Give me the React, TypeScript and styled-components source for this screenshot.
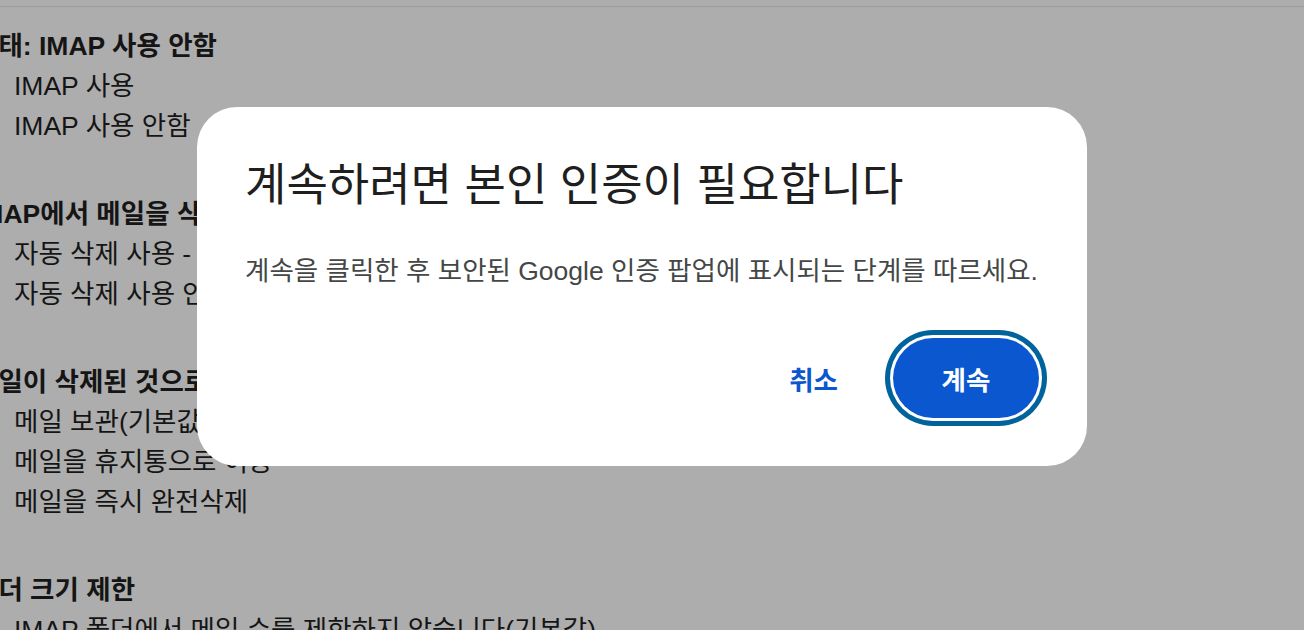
import React from "react";
import styled, { createGlobalStyle } from "styled-components";

const Global = createGlobalStyle`
  html, body { margin: 0; padding: 0; }
  body {
    width: 1304px;
    height: 630px;
    overflow: hidden;
    background: #ffffff;
    font-family: "Liberation Sans", "Noto Sans CJK KR", sans-serif;
  }
`;

const Page = styled.div`
  width: 1304px;
  height: 630px;
  overflow: hidden;
  background: #ffffff;
  padding-top: 6px;
  box-sizing: border-box;
`;

const Content = styled.div`
  border-top: 1px solid #e6e6e6;
  padding: 19px 0 0 0;
  margin-left: -26px;
  display: flex;
  flex-direction: column;
  gap: 48px;
`;

const Section = styled.section`
  display: flex;
  flex-direction: column;
`;

const Heading = styled.div`
  font-size: 26.5px;
  line-height: 40px;
  font-weight: 700;
  color: #1f1f1f;
  white-space: nowrap;
`;

const Option = styled.div`
  font-size: 26.5px;
  line-height: 40px;
  color: #1f1f1f;
  padding-left: 40px;
  white-space: nowrap;
`;

const Overlay = styled.div`
  position: fixed;
  inset: 0;
  background: rgba(0, 0, 0, 0.32);
  display: flex;
  align-items: flex-start;
  padding: 107px 0 0 197px;
`;

const Dialog = styled.div`
  width: 890px;
  box-sizing: border-box;
  background: #ffffff;
  border-radius: 40px;
  padding: 48px;
  display: flex;
  flex-direction: column;
`;

const Title = styled.h1`
  margin: 3px 0 0 0;
  font-size: 45px;
  line-height: 56px;
  font-weight: 400;
  color: #1f1f1f;
  white-space: nowrap;
`;

const Body = styled.p`
  margin: 39px 0 0 0;
  font-size: 26.5px;
  line-height: 36px;
  color: #444746;
  white-space: nowrap;
`;

const Actions = styled.div`
  margin-top: 49px;
  display: flex;
  justify-content: flex-end;
  align-items: center;
  gap: 31px;
`;

const TextButton = styled.button`
  border: none;
  background: transparent;
  height: 80px;
  padding: 0 24px;
  font-family: inherit;
  font-size: 26.5px;
  font-weight: 700;
  color: #0b57d0;
`;

const FilledButton = styled.button`
  border: none;
  background: #0b57d0;
  height: 80px;
  width: 146px;
  border-radius: 40px;
  font-family: inherit;
  font-size: 26.5px;
  font-weight: 700;
  color: #ffffff;
  box-shadow: 0 0 0 3px #ffffff, 0 0 0 8px #00639b;
`;

export default function App() {
  return (
    <>
      <Global />
      <Page>
        <Content>
          <Section>
            <Heading>상태: IMAP 사용 안함</Heading>
            <Option>IMAP 사용</Option>
            <Option>IMAP 사용 안함</Option>
          </Section>
          <Section>
            <Heading>IMAP에서 메일을 삭제됨으로 표시한 경우:</Heading>
            <Option>자동 삭제 사용 - 서버를 즉시 업데이트합니다(기본값)</Option>
            <Option>자동 삭제 사용 안함 - 클라이언트가 서버를 업데이트하도록 합니다</Option>
          </Section>
          <Section>
            <Heading>메일이 삭제된 것으로 표시되어 마지막으로 보이는 IMAP 폴더에서 삭제될 때:</Heading>
            <Option>메일 보관(기본값)</Option>
            <Option>메일을 휴지통으로 이동</Option>
            <Option>메일을 즉시 완전삭제</Option>
          </Section>
          <Section>
            <Heading>폴더 크기 제한</Heading>
            <Option>IMAP 폴더에서 메일 수를 제한하지 않습니다(기본값)</Option>
          </Section>
        </Content>
      </Page>
      <Overlay>
        <Dialog role="dialog">
          <Title>계속하려면 본인 인증이 필요합니다</Title>
          <Body>계속을 클릭한 후 보안된 Google 인증 팝업에 표시되는 단계를 따르세요.</Body>
          <Actions>
            <TextButton>취소</TextButton>
            <FilledButton>계속</FilledButton>
          </Actions>
        </Dialog>
      </Overlay>
    </>
  );
}
